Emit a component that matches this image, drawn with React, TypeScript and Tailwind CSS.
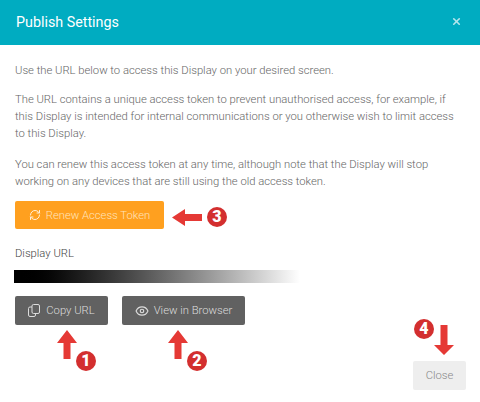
import { Eye, RefreshCw, X } from 'lucide-react';

const font = { fontFamily: 'Roboto, sans-serif' };

function ArrowLeft({ className }: { className: string }) {
  return (
    <svg className={className} width="30" height="17" viewBox="0 0 30 17">
      <path d="M0 8.5 L13 0 V5 H30 V12 H13 V17 Z" fill="#e53935" />
    </svg>
  );
}

function ArrowUp({ className }: { className: string }) {
  return (
    <svg className={className} width="20" height="29" viewBox="0 0 20 29">
      <path d="M10 0 L20 13 H13.5 V29 H6.5 V13 H0 Z" fill="#e53935" />
    </svg>
  );
}

function ArrowDown({ className }: { className: string }) {
  return (
    <svg className={className} width="20" height="30" viewBox="0 0 20 30">
      <path d="M10 30 L20 20 H13.5 V0 H6.5 V20 H0 Z" fill="#e53935" />
    </svg>
  );
}

function CopyIcon() {
  return (
    <svg width="12" height="13" viewBox="0 0 12 13" fill="none" stroke="currentColor" strokeWidth="1">
      <rect x="4" y="0.5" width="7.5" height="9" rx="1.5" />
      <path d="M4 3 H2 A1.5 1.5 0 0 0 0.5 4.5 V11 A1.5 1.5 0 0 0 2 12.5 H6 A1.5 1.5 0 0 0 7.5 11 V9.5" />
    </svg>
  );
}

function Badge({ n, className }: { n: number; className: string }) {
  return (
    <div
      className={`absolute flex h-5 w-5 items-center justify-center rounded-full bg-[#d32f2f] text-[16px] font-black leading-none text-white ${className}`}
    >
      {n}
    </div>
  );
}

export default function App() {
  return (
    <div className="relative flex h-[402px] w-[480px] flex-col overflow-hidden bg-white" style={font}>
      {/* Header */}
      <div className="flex h-[45px] shrink-0 items-center justify-between bg-[#00acc1] pl-4 pr-[18px]">
        <h4 className="text-[14.3px] font-normal text-white">Publish Settings</h4>
        <X size={11} strokeWidth={3.5} className="mb-[2px] text-[#b6e6ec]" />
      </div>

      <div className="flex flex-1 flex-col px-[15px] pt-[17px] text-[11.25px] font-light leading-[17px] text-[#666]">
        <p className="mb-[12px]">Use the URL below to access this Display on your desired screen.</p>
        <p className="mb-[14px]">
          The URL contains a unique access token to prevent unauthorised access, for example, if this Display is
          intended for internal communications or you otherwise wish to limit access to this Display.
        </p>
        <p className="mb-[11px]">
          You can renew this access token at any time, although note that the Display will stop working on any devices
          that are still using the old access token.
        </p>

        <button className="flex h-[28px] w-[149px] items-center justify-center gap-[5px] rounded-[2px] bg-[#ffa01f] text-[#ffe3bb]">
          <RefreshCw size={12} className="text-[#fff0da]" />
          Renew Access Token
        </button>

        <div className="mt-[16px] text-[#444]">Display URL</div>
        <div className="ml-[-1px] mt-[8px] h-[13px] w-[286px] bg-gradient-to-r from-black to-white" />

        <div className="mt-[13px] flex gap-[14px]">
          <button className="flex h-[29px] w-[93px] items-center justify-center gap-[6px] rounded-[2px] bg-[#616161] text-[#dcdcdc]">
            <CopyIcon />
            Copy URL
          </button>
          <button className="flex h-[29px] w-[123px] items-center justify-center gap-[5px] rounded-[2px] bg-[#616161] text-[#dcdcdc]">
            <Eye size={14} />
            View in Browser
          </button>
        </div>

        <div className="mt-[36px] flex justify-end">
          <button className="h-[29px] w-[53px] translate-x-[1px] rounded-[2px] bg-[#eeeeee] text-[#888]">Close</button>
        </div>
      </div>

      {/* Annotations */}
      <ArrowLeft className="absolute left-[172px] top-[209px]" />
      <Badge n={3} className="left-[207px] top-[207px]" />
      <ArrowUp className="absolute left-[57px] top-[330px]" />
      <Badge n={1} className="left-[76px] top-[351px]" />
      <ArrowUp className="absolute left-[168px] top-[330px]" />
      <Badge n={2} className="left-[187px] top-[351px]" />
      <ArrowDown className="absolute left-[434px] top-[325px]" />
      <Badge n={4} className="left-[414px] top-[319px]" />
    </div>
  );
}
